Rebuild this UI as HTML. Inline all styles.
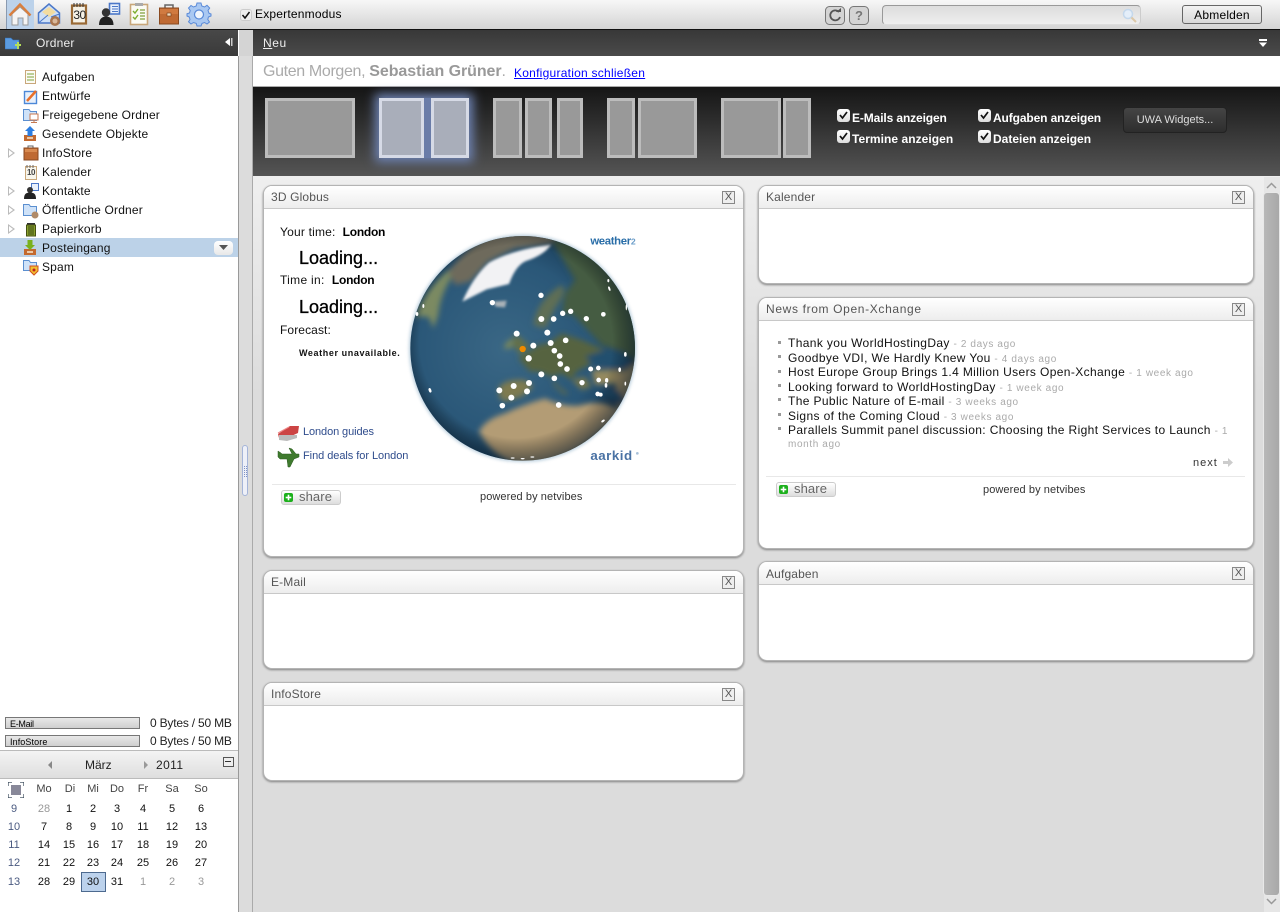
<!DOCTYPE html>
<html lang="de"><head><meta charset="utf-8"><title>Open-Xchange</title>
<style>
html,body{margin:0;padding:0;width:1280px;height:912px;overflow:hidden;background:#fff}
body{font-family:"Liberation Sans",sans-serif;font-size:12px;color:#000;position:relative}
div,span.t,a.t,svg.a{position:absolute}
.t{position:absolute;white-space:nowrap;line-height:14px;letter-spacing:.55px}
.tree{left:42px;color:#111;letter-spacing:.17px}
.c{width:30px;text-align:center;letter-spacing:0;color:#111;font-size:11px}
.h{color:#444}.w{color:#4a5a80}.g{color:#999}
.w1{position:absolute;background:#fff;border:1px solid #b4b4b4;border-radius:9px;box-shadow:0 1px 2px #808080;box-sizing:border-box}
.w1 .bar{position:absolute;left:0;right:0;top:0;height:22px;background:linear-gradient(#fff,#ededed);border-bottom:1px solid #c8c8c8;border-radius:8px 8px 0 0}
.w1 .ti{left:7px;top:4px;color:#555;letter-spacing:.15px}
.x{position:absolute;top:5px;right:8px;width:11px;height:11px;border:1px solid #888;background:#eee;font-size:11px;line-height:11px;text-align:center;color:#555}
.lay{position:absolute;box-sizing:border-box;border:3px solid #bcbcbc;background:#999;top:98px;height:60px}
.on{border-color:#d6dae6;background:#a9aeba}
.cb{position:absolute;width:13px;height:13px;background:linear-gradient(#fff,#ddd);border-radius:3px}
.bl{color:#fff;font-weight:bold;letter-spacing:-.12px}
.li{position:absolute;left:788px;letter-spacing:.37px;color:#111;white-space:nowrap;line-height:14px}
.li i{font-style:normal;font-size:10px;color:#aaa;letter-spacing:.62px}
.sq{position:absolute;left:778px;width:3px;height:3px;background:#999}
.sh{position:absolute;width:58px;height:13px;border:1px solid #ccc;border-radius:3px;background:linear-gradient(#fff,#ddd);font-size:13px;line-height:12px;color:#666}
.sh b{position:absolute;left:2px;top:2px;width:9px;height:9px;background:#1bb01b;border-radius:2px}
.sh b:before{content:"";position:absolute;left:2px;top:4px;width:5px;height:1px;background:#fff;box-shadow:0 0 0 .3px #fff}
.sh b:after{content:"";position:absolute;left:4px;top:2px;width:1px;height:5px;background:#fff;box-shadow:0 0 0 .3px #fff}
.sh span{position:absolute;left:17px;top:0;letter-spacing:.1px}
.tw{position:absolute;left:8px;width:0;height:0;border-left:7px solid #bbb;border-top:5px solid transparent;border-bottom:5px solid transparent}
.tw:after{content:"";position:absolute;left:-6px;top:-3px;border-left:4px solid #fff;border-top:3px solid transparent;border-bottom:3px solid transparent}
.lo{font-size:18px;line-height:18px;letter-spacing:0;-webkit-text-stroke:.3px #000}
.pw{font-size:11px;color:#333;letter-spacing:.08px}
</style></head><body>

<!-- top bar -->
<div style="left:0;top:0;width:1280px;height:29px;background:linear-gradient(#f7f7f7,#d4d4d4)"></div>
<div style="left:0;top:29px;width:1280px;height:1px;background:#111"></div>
<div style="left:6px;top:0;width:28px;height:29px;background:#bcd2ea;border-left:1px solid #8a9ab0;box-sizing:border-box"></div>

<svg class="a" style="left:0;top:0" width="215" height="29" viewBox="0 0 215 29">
<!-- home -->
<path d="M12 14V25H18V18H23V25H28V14L20 7Z" fill="#f4f4f4" stroke="#9a9a9a"/>
<path d="M9.500 15.500L20 4.500L30.500 15.500" fill="none" stroke="#d97f3e" stroke-width="2.400"/>
<!-- mail -->
<path d="M38.500 13L49 4L59.500 13V23H38.500Z" fill="#cfe0f6" stroke="#4c78c8" stroke-width="1.500"/>
<path d="M42 12L49 7L56 12L49 17Z" fill="#f3dca0"/>
<path d="M38.500 23L48 15M59.500 14L51 17" stroke="#4c78c8" fill="none"/>
<circle cx="55" cy="21" r="5" fill="#a8754f"/><circle cx="55" cy="21" r="2.500" fill="#d9b89a"/>
<!-- calendar -->
<rect x="72" y="5.500" width="14" height="18" fill="#f6f2e6" stroke="#9a6a35" stroke-width="2.200"/>
<path d="M74 3V7M77 3V7M80 3V7M83 3V7" stroke="#333"/>
<!-- contacts -->
<rect x="109.500" y="3.500" width="10" height="10.500" fill="#eaf1fb" stroke="#4c78c8" stroke-width="1.600"/>
<path d="M112 6.500H118M112 9H118M112 11.500H118" stroke="#4c78c8"/>
<circle cx="106" cy="12.500" r="4.200" fill="#333"/>
<path d="M99 25C99 19 102 16.500 106 16.500C110 16.500 113.500 19 113.500 25Z" fill="#222"/>
<!-- tasks -->
<rect x="130.500" y="4.500" width="17" height="20" fill="#fbfbf4" stroke="#c9a77a" stroke-width="1.600"/>
<rect x="135" y="3" width="8" height="3" fill="#aaa"/>
<path d="M133 11L135 13L138 9M133 17L135 19L138 15" stroke="#7fae2f" stroke-width="1.400" fill="none"/>
<path d="M140 10H145M140 13H145M140 16H145M140 19H145" stroke="#7fa03a" stroke-width="1.300"/>
<!-- briefcase -->
<path d="M165 8V5H173V8" fill="none" stroke="#666" stroke-width="1.500"/>
<rect x="159.500" y="8" width="19" height="16" fill="#bf6a33" stroke="#8a4a20"/>
<rect x="160" y="9" width="18" height="5" fill="#d07a40"/>
<rect x="167" y="13" width="4" height="3" fill="#f2d8b8" stroke="#6a3a18" stroke-width=".6"/>
<!-- gear -->
<path d="M197 4H201L201.800 7L204.500 8L207 6.300L209.700 9L208 11.500L209 14.200L211 15V17L208.400 18L207.800 20.500L209.500 23L207 25L204.500 23.500L202 24.400L201 27H197L196.200 24.400L193.500 23.500L191 25L188.500 22.800L190 20.500L189.200 18L187 17V14.800L189.500 14L190.200 11.500L188.500 9L191 6.500L193.500 8L196.200 7Z" transform="translate(0,-1)" fill="#a9c8f2" stroke="#5a8ad8"/>
<circle cx="199" cy="14.500" r="4.500" fill="#eef4fc" stroke="#5a8ad8" stroke-width="1.200"/>
</svg>
<span class="t" style="left:72px;top:8px;font-size:12px;width:15px;text-align:center;letter-spacing:-.5px;color:#222">30</span>

<div class="cb" style="left:240px;top:9px;width:12px;height:12px;background:#eee;border:1px solid #ccc;box-sizing:border-box"></div>
<svg class="a" style="left:240px;top:9px" width="12" height="12"><path d="M2.500 6L5 9L9.500 3" fill="none" stroke="#111" stroke-width="1.500"/></svg>
<span class="t" style="left:255px;top:7px;letter-spacing:.2px">Expertenmodus</span>

<svg class="a" style="left:825px;top:6px" width="45" height="20">
<rect x=".5" y=".5" width="19" height="18" rx="4" fill="#d4d4d4" stroke="#777"/>
<path d="M14 6A5 5 0 1 0 15 11" fill="none" stroke="#555" stroke-width="1.800"/><path d="M11 6H16V2Z" fill="#555"/>
<rect x="24.500" y=".5" width="19" height="18" rx="4" fill="#d4d4d4" stroke="#777"/>
</svg>
<span class="t" style="left:849px;top:9px;width:20px;text-align:center;font-weight:bold;font-size:13px;color:#777;letter-spacing:0">?</span>
<div style="left:882px;top:5px;width:259px;height:20px;box-sizing:border-box;border:1px solid #999;border-bottom-color:#ddd;border-right-color:#ccc;border-radius:4px;background:linear-gradient(#ddd,#eee)"></div>
<svg class="a" style="left:1122px;top:8px" width="16" height="16"><circle cx="6" cy="6" r="4.500" fill="#e4eef9" stroke="#c4d8ec" stroke-width="1.500"/><path d="M9.500 9.500L14 14" stroke="#dcc8a8" stroke-width="2"/></svg>
<div style="left:1182px;top:5px;width:80px;height:19px;box-sizing:border-box;border:1px solid #666;border-radius:3px;background:linear-gradient(#f2f2f2,#d8d8d8)"></div>
<span class="t" style="left:1182px;top:8px;width:80px;text-align:center;letter-spacing:.2px">Abmelden</span>

<!-- dark headers -->
<div style="left:0;top:30px;width:238px;height:26px;background:linear-gradient(#484848,#3a3a3a)"></div>
<div style="left:253px;top:30px;width:1027px;height:26px;background:linear-gradient(#383838,#4a4a4a)"></div>
<svg class="a" style="left:5px;top:37px" width="17" height="14"><path d="M0 1H6L8 3H14V12H0Z" fill="#5b9be0" stroke="#2f6fb8" stroke-width=".6"/><path d="M10 8H16M13 5V12" stroke="#b5e05a" stroke-width="2"/></svg>
<span class="t" style="left:36px;top:36px;color:#eee;letter-spacing:.2px">Ordner</span>
<svg class="a" style="left:224px;top:38px" width="10" height="9"><path d="M6 0V8L1 4Z" fill="#fff"/><rect x="7" y="0" width="1.500" height="8" fill="#ccc"/></svg>
<span class="t" style="left:263px;top:36px;color:#eee;letter-spacing:.6px"><u>N</u>eu</span>
<svg class="a" style="left:1258px;top:39px" width="11" height="9"><rect x="1" y="0" width="8" height="2" fill="#fff"/><path d="M1 3.500H9L5 8Z" fill="#fff"/></svg>

<!-- sidebar / splitter -->
<div style="left:238px;top:56px;width:1px;height:856px;background:#999"></div>
<div style="left:239px;top:30px;width:14px;height:882px;background:#dcdcdc;box-sizing:border-box;border-right:1px solid #aaa"></div>
<div style="left:239px;top:30px;width:14px;height:26px;background:#d4d4d4"></div>
<div style="left:242px;top:445px;width:6px;height:51px;box-sizing:border-box;border:1px solid #a4b4d8;border-radius:3px;background:#eef0f8"></div>
<svg class="a" style="left:244px;top:466px" width="3" height="12"><path d="M.5 0V12M2.500 0V12" stroke="#7f92c4" stroke-dasharray="1 1"/></svg>

<!-- tree -->
<div style="left:0;top:238px;width:238px;height:19px;background:#bcd2e8"></div>
<div style="left:214px;top:241px;width:19px;height:14px;background:linear-gradient(#fff,#e8e8e8);border-radius:4px"></div>
<svg class="a" style="left:219px;top:245px" width="10" height="6"><path d="M0 0H9L4.500 5Z" fill="#555"/></svg>

<span class="t tree" style="top:70px">Aufgaben</span>
<span class="t tree" style="top:89px">Entwürfe</span>
<span class="t tree" style="top:108px">Freigegebene Ordner</span>
<span class="t tree" style="top:127px">Gesendete Objekte</span>
<span class="t tree" style="top:146px">InfoStore</span>
<span class="t tree" style="top:165px">Kalender</span>
<span class="t tree" style="top:184px">Kontakte</span>
<span class="t tree" style="top:203px">Öffentliche Ordner</span>
<span class="t tree" style="top:222px">Papierkorb</span>
<span class="t tree" style="top:241px">Posteingang</span>
<span class="t tree" style="top:260px">Spam</span>
<div class="tw" style="top:148px"></div><div class="tw" style="top:186px"></div><div class="tw" style="top:205px"></div><div class="tw" style="top:224px"></div>

<svg class="a" style="left:22px;top:68px" width="18" height="208" viewBox="0 0 18 208">
<!-- aufgaben y0 -->
<rect x="3.500" y="2.500" width="10" height="13" fill="#fbfbf4" stroke="#c9a77a"/>
<path d="M5 6H12M5 9H12M5 12H12" stroke="#7fa03a"/>
<!-- entwuerfe y19 -->
<rect x="2.500" y="23.500" width="12" height="12" fill="#e8f0fb" stroke="#4c88d8" stroke-width="1.400"/>
<path d="M5 33L14 23" stroke="#e8702a" stroke-width="2.500"/>
<!-- freigegeben y38 -->
<path d="M1.500 41.500H7L8.500 43.500H14.500V52.500H1.500Z" fill="#cfe2f8" stroke="#5b8fd0"/>
<rect x="8" y="46" width="8" height="6" fill="#fff" stroke="#c87a50"/><path d="M12 52V54M9 54.500H15" stroke="#c87a50"/>
<!-- gesendet y57 -->
<path d="M2 67H14V73H2Z" fill="#c46a2f"/><path d="M5 69H11V71H5Z" fill="#eac9a8"/>
<path d="M8 58L13 63H10.500V68H5.500V63H3Z" fill="#2e7ee0"/>
<!-- infostore y76 -->
<path d="M6 80V78H11V80" fill="none" stroke="#666"/><rect x="2" y="80" width="14" height="12" fill="#bf6a33" stroke="#8a4a20"/><rect x="3" y="81" width="12" height="3" fill="#d88a50"/>
<!-- kalender y95 -->
<rect x="3.500" y="98.500" width="11" height="13" fill="#f8f6ec" stroke="#c9a77a"/><path d="M5 97V100M8 97V100M11 97V100" stroke="#666"/>
<!-- kontakte y114 -->
<rect x="9.500" y="115.500" width="7" height="7" fill="#eaf1fb" stroke="#4c78c8"/>
<circle cx="8" cy="122" r="3" fill="#333"/><path d="M2 131C2 126 4 124.500 8 124.500C12 124.500 14 126 14 131Z" fill="#222"/>
<!-- oeffentlich y133 -->
<path d="M1.500 136.500H7L8.500 138.500H14.500V147.500H1.500Z" fill="#cfe2f8" stroke="#5b8fd0"/><circle cx="13" cy="147" r="3.500" fill="#b08a68"/>
<!-- papierkorb y152 -->
<rect x="5" y="155" width="8" height="1.500" fill="#333"/><rect x="4.500" y="157" width="9" height="11" fill="#8aa030" stroke="#445010"/><path d="M7 158V167M9 158V167M11 158V167" stroke="#3a4a10"/>
<!-- posteingang y171 -->
<path d="M2 181H14V187H2Z" fill="#c46a2f"/><path d="M5 183H11V185H5Z" fill="#eac9a8"/>
<path d="M5.500 172H10.500V177H13L8 182L3 177H5.500Z" fill="#7ab01e"/>
<!-- spam y190 -->
<path d="M1.500 192.500H7L8.500 194.500H14.500V202.500H1.500Z" fill="#cfe2f8" stroke="#5b8fd0"/>
<path d="M8 198H16V203L12 207L8 203Z" fill="#f2c030" stroke="#d05020"/><circle cx="12" cy="202" r="1.500" fill="#c02020"/>
</svg>
<span class="t" style="left:26px;top:166px;font-size:8px;width:10px;letter-spacing:-.4px;text-align:center;color:#444;font-weight:bold">10</span>

<!-- storage -->
<div style="left:5px;top:717px;width:135px;height:12px;box-sizing:border-box;border:1px solid #777;background:linear-gradient(#e8e8e8,#cfcfcf)"></div>
<div style="left:5px;top:735px;width:135px;height:12px;box-sizing:border-box;border:1px solid #777;background:linear-gradient(#e8e8e8,#cfcfcf)"></div>
<span class="t" style="left:10px;top:717px;font-size:9px;letter-spacing:-.3px">E-Mail</span>
<span class="t" style="left:10px;top:735px;font-size:9px;letter-spacing:.1px">InfoStore</span>
<span class="t" style="left:150px;top:716px;letter-spacing:-.2px;color:#222">0 Bytes / 50 MB</span>
<span class="t" style="left:150px;top:734px;letter-spacing:-.2px;color:#222">0 Bytes / 50 MB</span>

<!-- calendar -->
<div style="left:0;top:750px;width:238px;height:29px;box-sizing:border-box;border-top:1px solid #bbb;border-bottom:1px solid #bbb;background:linear-gradient(#f4f4f4,#dedede)"></div>
<svg class="a" style="left:47px;top:761px" width="102" height="9"><path d="M5 0V8L1 4Z" fill="#888"/><path d="M97 0V8L101 4Z" fill="#999"/></svg>
<span class="t" style="left:85px;top:758px;letter-spacing:0;color:#222">März</span>
<span class="t" style="left:156px;top:758px;letter-spacing:.4px;color:#222">2011</span>
<div style="left:223px;top:757px;width:9px;height:8px;border:1px solid #555;background:#eee"></div>
<div style="left:225px;top:761px;width:6px;height:1px;background:#333"></div>

<svg class="a" style="left:8px;top:782px" width="16" height="16"><rect x="3" y="3" width="10" height="10" fill="#889"/><path d="M0 4V0H4M12 0H16V4M16 12V16H12M4 16H0V12" fill="none" stroke="#345" stroke-width="1.200"/></svg>
<div style="left:81px;top:872px;width:25px;height:20px;box-sizing:border-box;border:1px solid #4d6a8f;background:#bcd2ec"></div>

<span class="t c h" style="left:29px;top:782px">Mo</span><span class="t c h" style="left:55px;top:782px">Di</span><span class="t c h" style="left:78px;top:782px">Mi</span><span class="t c h" style="left:102px;top:782px">Do</span><span class="t c h" style="left:128px;top:782px">Fr</span><span class="t c h" style="left:157px;top:782px">Sa</span><span class="t c h" style="left:186px;top:782px">So</span>

<span class="t c w" style="left:-1px;top:802px">9</span><span class="t c g" style="left:29px;top:802px">28</span><span class="t c" style="left:54px;top:802px">1</span><span class="t c" style="left:78px;top:802px">2</span><span class="t c" style="left:102px;top:802px">3</span><span class="t c" style="left:128px;top:802px">4</span><span class="t c" style="left:157px;top:802px">5</span><span class="t c" style="left:186px;top:802px">6</span>

<span class="t c w" style="left:-1px;top:820px">10</span><span class="t c" style="left:29px;top:820px">7</span><span class="t c" style="left:54px;top:820px">8</span><span class="t c" style="left:78px;top:820px">9</span><span class="t c" style="left:102px;top:820px">10</span><span class="t c" style="left:128px;top:820px">11</span><span class="t c" style="left:157px;top:820px">12</span><span class="t c" style="left:186px;top:820px">13</span>

<span class="t c w" style="left:-1px;top:838px">11</span><span class="t c" style="left:29px;top:838px">14</span><span class="t c" style="left:54px;top:838px">15</span><span class="t c" style="left:78px;top:838px">16</span><span class="t c" style="left:102px;top:838px">17</span><span class="t c" style="left:128px;top:838px">18</span><span class="t c" style="left:157px;top:838px">19</span><span class="t c" style="left:186px;top:838px">20</span>

<span class="t c w" style="left:-1px;top:856px">12</span><span class="t c" style="left:29px;top:856px">21</span><span class="t c" style="left:54px;top:856px">22</span><span class="t c" style="left:78px;top:856px">23</span><span class="t c" style="left:102px;top:856px">24</span><span class="t c" style="left:128px;top:856px">25</span><span class="t c" style="left:157px;top:856px">26</span><span class="t c" style="left:186px;top:856px">27</span>

<span class="t c w" style="left:-1px;top:875px">13</span><span class="t c" style="left:29px;top:875px">28</span><span class="t c" style="left:54px;top:875px">29</span><span class="t c" style="left:78px;top:875px">30</span><span class="t c" style="left:102px;top:875px">31</span><span class="t c g" style="left:128px;top:875px">1</span><span class="t c g" style="left:157px;top:875px">2</span><span class="t c g" style="left:186px;top:875px">3</span>

<!-- greeting -->
<div style="left:253px;top:86px;width:1027px;height:1px;background:#aaa"></div>
<span class="t" style="left:263px;top:63px;font-size:16px;line-height:18px;letter-spacing:-.35px;color:#aaa">Guten Morgen, <b style="color:#999;letter-spacing:-.07px">Sebastian Grüner</b>.</span>
<a class="t" style="left:514px;top:66px;color:#00f;text-decoration:underline;letter-spacing:.25px">Konfiguration schließen</a>

<!-- layout chooser -->
<div style="left:253px;top:87px;width:1027px;height:89px;background:linear-gradient(#151515,#555)"></div>
<div class="lay" style="left:265px;width:90px"></div>
<div style="left:379px;top:98px;width:90px;height:60px;background:#6a7ca8;box-shadow:0 0 10px 4px #6f84b4"></div>
<div class="lay on" style="left:379px;width:45px"></div><div class="lay on" style="left:431px;width:38px"></div>
<div class="lay" style="left:493px;width:29px"></div><div class="lay" style="left:525px;width:27px"></div><div class="lay" style="left:557px;width:26px"></div>
<div class="lay" style="left:607px;width:28px"></div><div class="lay" style="left:638px;width:59px"></div>
<div class="lay" style="left:721px;width:60px"></div><div class="lay" style="left:783px;width:28px"></div>

<div class="cb" style="left:837px;top:109px"></div><div class="cb" style="left:837px;top:130px"></div><div class="cb" style="left:978px;top:109px"></div><div class="cb" style="left:978px;top:130px"></div>
<svg class="a" style="left:837px;top:109px" width="154" height="34"><g fill="none" stroke="#111" stroke-width="1.700"><path d="M3 6L5.500 9L10 3"/><path d="M3 27L5.500 30L10 24"/><path d="M144 6L146.500 9L151 3"/><path d="M144 27L146.500 30L151 24"/></g></svg>
<span class="t bl" style="left:852px;top:111px">E-Mails anzeigen</span>
<span class="t bl" style="left:852px;top:132px;letter-spacing:.05px">Termine anzeigen</span>
<span class="t bl" style="left:993px;top:111px">Aufgaben anzeigen</span>
<span class="t bl" style="left:993px;top:132px;letter-spacing:0">Dateien anzeigen</span>
<div style="left:1123px;top:107px;width:104px;height:26px;box-sizing:border-box;border:1px solid #222;border-radius:4px;background:linear-gradient(#444,#2e2e2e)"></div>
<span class="t" style="left:1123px;top:113px;width:104px;text-align:center;font-size:11px;color:#ddd;letter-spacing:0">UWA Widgets...</span>

<!-- main area -->
<div style="left:253px;top:176px;width:1027px;height:736px;background:linear-gradient(#efefef,#dcdcdc 30%)"></div>
<div style="left:1264px;top:177px;width:16px;height:735px;background:#e6e6e6"></div>
<div style="left:1264px;top:193px;width:15px;height:702px;background:linear-gradient(90deg,#b8b8b8,#a8a8a8);border-radius:3px;box-shadow:0 0 0 1px #e8e8e8"></div>
<svg class="a" style="left:1266px;top:181px" width="11" height="726"><path d="M1 7L5.500 2.500L10 7M1 718L5.500 722.500L10 718" fill="none" stroke="#999" stroke-width="1.500"/></svg>

<!-- widgets -->
<div class="w1" style="left:263px;top:185px;width:481px;height:372px"><div class="bar"></div><span class="t ti">3D Globus</span><div class="x">X</div></div>
<div class="w1" style="left:263px;top:570px;width:481px;height:99px"><div class="bar"></div><span class="t ti">E-Mail</span><div class="x">X</div></div>
<div class="w1" style="left:263px;top:682px;width:481px;height:99px"><div class="bar"></div><span class="t ti">InfoStore</span><div class="x">X</div></div>
<div class="w1" style="left:758px;top:185px;width:496px;height:99px"><div class="bar"></div><span class="t ti">Kalender</span><div class="x">X</div></div>
<div class="w1" style="left:758px;top:297px;width:496px;height:252px"><div class="bar"></div><span class="t ti" style="letter-spacing:.65px">News from Open-Xchange</span><div class="x">X</div></div>
<div class="w1" style="left:758px;top:561px;width:496px;height:100px"><div class="bar"></div><span class="t ti" style="top:5px">Aufgaben</span><div class="x">X</div></div>

<!-- globe widget text -->
<span class="t" style="left:280px;top:225px;color:#111;letter-spacing:.2px">Your time:&nbsp; <b style="letter-spacing:-.25px;color:#000">London</b></span>
<span class="t lo" style="left:299px;top:249px">Loading...</span>
<span class="t" style="left:280px;top:273px;color:#111;letter-spacing:.3px">Time in:&nbsp; <b style="letter-spacing:-.25px;color:#000">London</b></span>
<span class="t lo" style="left:299px;top:298px">Loading...</span>
<span class="t" style="left:280px;top:323px;color:#111;letter-spacing:.1px">Forecast:</span>
<span class="t" style="left:299px;top:346px;font-size:9px;font-weight:bold;letter-spacing:.6px;color:#111">Weather unavailable.</span>
<span class="t" style="left:303px;top:425px;font-size:11px;color:#2f4c8c;letter-spacing:-.1px">London guides</span>
<span class="t" style="left:303px;top:449px;font-size:11px;color:#2f4c8c;letter-spacing:-.05px">Find deals for London</span>
<svg class="a" style="left:277px;top:424px" width="24" height="44">
<path d="M1 10L13 2H22L21 9L10 14H2Z" fill="#c44"/><path d="M2 11H20V14L10 17L2 16Z" fill="#bbb"/><path d="M1 9L12 3" stroke="#e88" fill="none"/>
<path d="M1 27L4 29L5 30H15L12 24L15 25L19 30H22V33L17 35L13 43H11L10 35H3L1 33Z" fill="#3f7a2e" stroke="#2a5a20" stroke-width=".5"/>
</svg>

<!-- globe -->
<svg class="a" style="left:405px;top:230px" width="240" height="240" viewBox="0 0 720 720">
<defs>
<radialGradient id="oc" cx=".42" cy=".5" r=".6"><stop offset="0" stop-color="#3a6785"/><stop offset=".65" stop-color="#2a5778"/><stop offset="1" stop-color="#143550"/></radialGradient>
<radialGradient id="sh" cx=".47" cy=".47" r=".55"><stop offset=".78" stop-color="#000" stop-opacity="0"/><stop offset="1" stop-color="#061a2c" stop-opacity=".6"/></radialGradient>
<clipPath id="cl"><circle cx="353" cy="355" r="337"/></clipPath>
<filter id="bl" x="-10%" y="-10%" width="120%" height="120%"><feGaussianBlur stdDeviation="9"/></filter>
<filter id="bs" x="-10%" y="-10%" width="120%" height="120%"><feGaussianBlur stdDeviation="4"/></filter>
<filter id="gl" x="-10%" y="-10%" width="120%" height="120%"><feGaussianBlur stdDeviation="5"/></filter>
</defs>
<circle cx="353" cy="355" r="341" fill="#8fb0c8" opacity=".6" filter="url(#gl)"/>
<circle cx="353" cy="355" r="337" fill="url(#oc)"/>
<g clip-path="url(#cl)"><g filter="url(#bl)">
<path d="M30 265Q60 170 150 105L135 150Q105 200 100 255L85 295L72 262L45 258Z" fill="#7c8a62"/>
<path d="M130 125Q200 30 300 0L470 0L440 40L330 55L250 95L195 155L150 165Z" fill="#6e6a5c"/>
<path d="M440 30L620 30L730 200L730 420L650 365L590 345L505 255L470 250L480 190L510 150Z" fill="#455c42"/>
<path d="M385 285Q395 210 470 165Q490 180 450 235L420 295Z" fill="#5e6e54"/>
<path d="M340 385L400 345L430 340L470 310L530 330L600 360L560 400L515 425L500 450L470 430L440 440L400 425L375 425Z" fill="#566440"/>
<path d="M540 380L600 360L655 365L680 400L640 420L560 400Z" fill="#23506e"/>
<path d="M280 475Q300 445 360 450L385 470L350 500L300 515L285 505Z" fill="#7e7a50"/>
<path d="M440 440L460 470L490 490L480 495L450 470Z" fill="#646a44"/>
<path d="M500 450L540 440L560 470L530 480Z" fill="#74744c"/>
<path d="M560 420L650 420L640 460L570 465Z" fill="#94895f"/>
<path d="M630 440L730 370L730 560L640 550Z" fill="#a08f68"/>
<path d="M600 480L640 480L670 530L620 510Z" fill="#23506e"/>
<path d="M222 605Q240 568 300 550Q350 525 420 505Q470 530 520 527Q580 510 622 530L660 540L610 590L565 625Q480 700 350 710Q260 680 222 605Z" fill="#b39c74"/>
<path d="M330 310L372 345L350 378L322 345Z" fill="#64704a"/>
<path d="M296 348L322 322L322 350L305 358Z" fill="#7e8a5a"/>
</g>
<g filter="url(#bs)">
<path d="M172 215Q205 140 252 98Q320 60 438 44Q420 72 372 90Q335 98 312 162L245 178Z" fill="#f2f2f4"/>
<path d="M265 215L305 212L300 232L272 230Z" fill="#aab2b8"/>
</g>
<circle cx="353" cy="355" r="337" fill="url(#sh)"/></g>
<g fill="#fff">
<circle cx="262" cy="218" r="8"/><circle cx="408" cy="196" r="8"/><circle cx="473" cy="250" r="8"/><circle cx="497" cy="244" r="8"/><circle cx="409" cy="267" r="9"/><circle cx="446" cy="267" r="8.500"/><circle cx="544" cy="266" r="8"/><circle cx="595" cy="253" r="7"/>
<circle cx="335" cy="311" r="9"/><circle cx="427" cy="308" r="9"/><circle cx="482" cy="331" r="8.500"/><circle cx="437" cy="339" r="9"/><circle cx="385" cy="347" r="9"/><circle cx="448" cy="362" r="8.500"/><circle cx="464" cy="378" r="8.500"/><circle cx="371" cy="385" r="9.500"/><circle cx="466" cy="402" r="8.500"/><circle cx="486" cy="417" r="8.500"/>
<circle cx="409" cy="433" r="9"/><circle cx="448" cy="445" r="8.500"/><circle cx="557" cy="417" r="7.500"/><circle cx="580" cy="414" r="7"/><circle cx="581" cy="450" r="7"/><circle cx="531" cy="458" r="8"/><circle cx="372" cy="459" r="9"/><circle cx="326" cy="468" r="9"/><circle cx="283" cy="481" r="9"/><circle cx="366" cy="484" r="9"/><circle cx="319" cy="503" r="9"/><circle cx="292" cy="527" r="8.500"/><circle cx="461" cy="525" r="8.500"/><circle cx="578" cy="492" r="7"/><circle cx="587" cy="494" r="6"/>
<ellipse cx="605" cy="451" rx="5" ry="7"/><ellipse cx="603" cy="466" rx="4" ry="7"/><ellipse cx="644" cy="419" rx="4" ry="7"/><ellipse cx="661" cy="373" rx="4" ry="7"/><ellipse cx="75" cy="481" rx="4" ry="7" transform="rotate(-20 75 481)"/><ellipse cx="55" cy="228" rx="3" ry="6"/><ellipse cx="36" cy="252" rx="4" ry="6"/><ellipse cx="613" cy="176" rx="3" ry="7" transform="rotate(-20 613 176)"/><ellipse cx="610" cy="152" rx="3" ry="5"/><ellipse cx="664" cy="232" rx="2" ry="9"/><ellipse cx="661" cy="461" rx="2.500" ry="6"/><ellipse cx="594" cy="573" rx="6" ry="3" transform="rotate(-35 594 573)"/><ellipse cx="323" cy="684" rx="6" ry="2"/><ellipse cx="353" cy="686" rx="6" ry="2"/><ellipse cx="382" cy="681" rx="6" ry="2"/>
</g>
<circle cx="353" cy="357" r="9.500" fill="#f08a00"/>
<text x="556" y="43" font-family="Liberation Sans,sans-serif" font-size="34" font-weight="bold" fill="#2a6ea8" letter-spacing="-1">weather<tspan font-size="26" fill="#6a9cc8">2</tspan></text>
<text x="556" y="690" font-family="Liberation Sans,sans-serif" font-size="40" font-weight="bold" fill="#4a72a4" letter-spacing="1.500">aarkid</text>
<circle cx="697" cy="670" r="4" fill="#a8c0d8"/>
</svg>

<div style="left:272px;top:484px;width:464px;height:1px;background:#e8e8e8"></div>
<div class="sh" style="left:281px;top:490px"><b></b><span>share</span></div>
<span class="t pw" style="left:480px;top:490px">powered by netvibes</span>

<!-- news -->
<div class="sq" style="left:778px;top:341px"></div><div class="sq" style="left:778px;top:355px"></div><div class="sq" style="left:778px;top:370px"></div><div class="sq" style="left:778px;top:384px"></div><div class="sq" style="left:778px;top:398px"></div><div class="sq" style="left:778px;top:413px"></div><div class="sq" style="left:778px;top:427px"></div>
<span class="li" style="top:336px">Thank you WorldHostingDay <i>- 2 days ago</i></span>
<span class="li" style="top:351px">Goodbye VDI, We Hardly Knew You <i>- 4 days ago</i></span>
<span class="li" style="top:365px">Host Europe Group Brings 1.4 Million Users Open-Xchange <i>- 1 week ago</i></span>
<span class="li" style="top:380px">Looking forward to WorldHostingDay <i>- 1 week ago</i></span>
<span class="li" style="top:394px">The Public Nature of E-mail <i>- 3 weeks ago</i></span>
<span class="li" style="top:409px">Signs of the Coming Cloud <i>- 3 weeks ago</i></span>
<span class="li" style="top:423px">Parallels Summit panel discussion: Choosing the Right Services to Launch <i>- 1</i></span>
<span class="li" style="top:436px"><i>month ago</i></span>
<span class="t" style="left:1193px;top:456px;font-size:11px;color:#333;letter-spacing:1px">next</span>
<svg class="a" style="left:1223px;top:457px" width="11" height="11"><path d="M0 4H5V1L10 5.500L5 10V7H0Z" fill="#ccc"/></svg>
<div style="left:766px;top:476px;width:479px;height:1px;background:#e8e8e8"></div>
<div class="sh" style="left:776px;top:482px"><b></b><span>share</span></div>
<span class="t pw" style="left:983px;top:483px">powered by netvibes</span>

</body></html>
